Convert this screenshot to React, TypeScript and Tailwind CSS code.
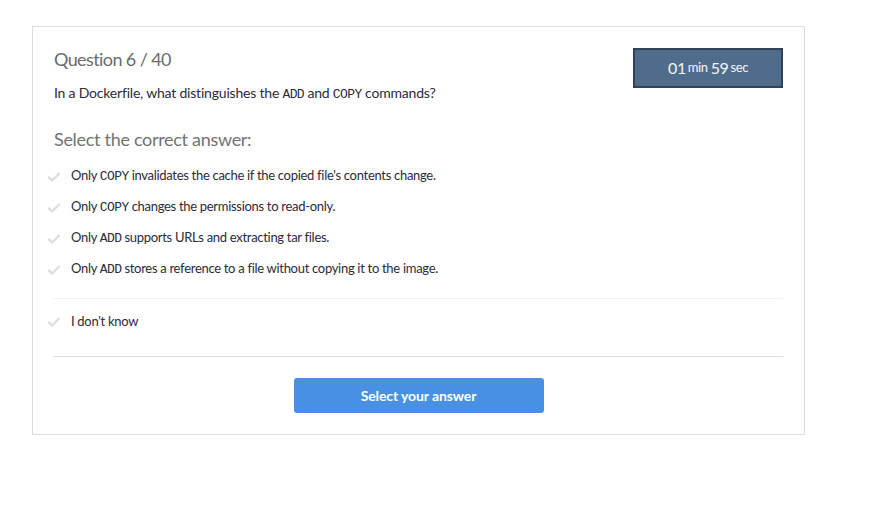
import React from "react";

const Check = () => (
  <svg width="12" height="10" viewBox="0 0 12 10" className="shrink-0">
    <path d="M1 5.5 L4.3 8.5 L11 1.5" stroke="#dedede" strokeWidth="2.4" fill="none" strokeLinecap="round" strokeLinejoin="round" />
  </svg>
);

const Code = ({ children }: { children: React.ReactNode }) => (
  <span className="text-[13px] tracking-[-0.6px]" style={{ fontFamily: '"Liberation Mono", monospace' }}>{children}</span>
);

const options: React.ReactNode[] = [
  <>Only <Code>COPY</Code> invalidates the cache if the copied file's contents change.</>,
  <>Only <Code>COPY</Code> changes the permissions to read-only.</>,
  <>Only <Code>ADD</Code> supports URLs and extracting tar files.</>,
  <>Only <Code>ADD</Code> stores a reference to a file without copying it to the image.</>,
];

export default function App() {
  return (
    <div className="w-[881px] h-[520px] bg-white pl-[32px] pt-[26px]" style={{ fontFamily: 'Lato, "Open Sans", sans-serif' }}>
      <div className="w-[773px] h-[409px] border border-[#dcdcdc] px-[21px] pt-[20px]">
        <div className="flex justify-between">
          <div>
            <div className="text-[18px] text-[#6b6b6b] leading-[24px] tracking-[-0.6px]">Question 6 / 40</div>
            <div className="text-[14px] text-[#2b2b3b] mt-[13px] leading-[18px] tracking-[-0.2px]">
              In a Dockerfile, what distinguishes the <Code>ADD</Code> and <Code>COPY</Code> commands?
            </div>
          </div>
          <div className="mt-[1px] w-[150px] h-[40px] bg-[#4f6d8a] border-2 border-[#2f4358] flex items-center justify-center text-[#f2f5f8] tracking-[-0.4px]">
            <span className="text-[16px]">01</span>
            <span className="text-[13px] ml-[2px]">min</span>
            <span className="text-[16px] ml-[3px]">59</span>
            <span className="text-[13px] ml-[2px]">sec</span>
          </div>
        </div>
        <div className="text-[18px] text-[#737373] mt-[23px] leading-[24px] tracking-[-0.3px]">Select the correct answer:</div>
        <div className="mt-[10px] flex flex-col">
          {options.map((o, i) => (
            <div key={i} className="flex items-center h-[31px] -ml-[6px]">
              <Check />
              <span className="ml-[11px] text-[13px] text-[#2b2b3b] tracking-[-0.3px]">{o}</span>
            </div>
          ))}
        </div>
        <div className="border-t border-[#f2f2f2] mt-[13px]" />
        <div className="flex items-center h-[44px] -ml-[6px] pt-[1px]">
          <Check />
          <span className="ml-[11px] text-[13px] text-[#2b2b3b] tracking-[-0.3px]">I don't know</span>
        </div>
        <div className="border-t border-[#dddddd] mt-[13px]" />
        <div className="flex justify-center mt-[21px]">
          <button className="w-[250px] h-[35px] bg-[#4a90e2] rounded-[3px] text-white text-[14px] font-bold tracking-[-0.1px]">
            Select your answer
          </button>
        </div>
      </div>
    </div>
  );
}
